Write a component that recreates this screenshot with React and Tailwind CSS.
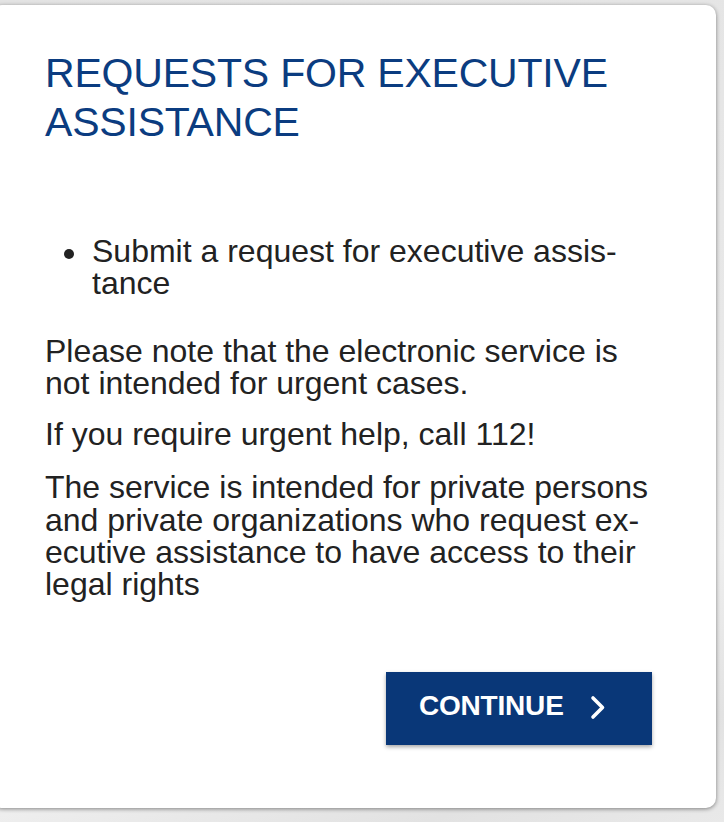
export default function App() {
  return (
    <div
      className="min-h-screen w-[724px] h-[822px] overflow-hidden bg-[linear-gradient(160deg,#e3e3e3_0%,#e8e8e8_55%,#eeeeee_75%,#e2e2e2_90%,#e9e9e9_100%)] pt-[5px]"
      style={{ fontFamily: '"Liberation Sans", Arial, Helvetica, sans-serif' }}
    >
      <div className="ml-[-8px] w-[724px] h-[803px] rounded-[10px] bg-white shadow-[0_1px_4px_rgba(0,0,0,0.45)] pl-[53px] pr-[64px] pt-[44px] flex flex-col">
        <h1 className="text-[41px] leading-[49px] text-[#0b3c80] font-normal tracking-[-0.2px]">
          <span className="block whitespace-nowrap">REQUESTS FOR EXECUTIVE</span>
          <span className="block whitespace-nowrap">ASSISTANCE</span>
        </h1>

        <div className="text-[32px] leading-[32.3px] text-[#222222]">
          <ul className="mt-[88px] pl-[19px]">
            <li className="flex items-start">
              <span className="mt-[14px] mr-[18px] w-[10px] h-[10px] rounded-full bg-[#222222] shrink-0" />
              <span>
                <span className="block whitespace-nowrap">Submit a request for executive assis-</span>
                <span className="block whitespace-nowrap">tance</span>
              </span>
            </li>
          </ul>

          <p className="mt-[35px]">
            <span className="block whitespace-nowrap">Please note that the electronic service is</span>
            <span className="block whitespace-nowrap">not intended for urgent cases.</span>
          </p>

          <p className="mt-[19px] whitespace-nowrap">If you require urgent help, call 112!</p>

          <p className="mt-[21px]">
            <span className="block whitespace-nowrap">The service is intended for private persons</span>
            <span className="block whitespace-nowrap">and private organizations who request ex-</span>
            <span className="block whitespace-nowrap">ecutive assistance to have access to their</span>
            <span className="block whitespace-nowrap">legal rights</span>
          </p>
        </div>

        <div className="mt-[71px] flex justify-end">
          <button className="w-[266px] h-[73px] bg-[#093778] text-white shadow-[0_2px_4px_rgba(0,0,0,0.35)] flex items-center pl-[33px]">
            <span className="text-[28px] font-bold leading-none tracking-[-0.2px] mt-[-4px]">CONTINUE</span>
            <svg
              className="ml-[26px] mt-[-2px]"
              width="16"
              height="25"
              viewBox="0 0 16 25"
              fill="none"
            >
              <path
                d="M3 3 L12.5 12.5 L3 22"
                stroke="white"
                strokeWidth="3.6"
                strokeLinecap="round"
                strokeLinejoin="round"
              />
            </svg>
          </button>
        </div>
      </div>
    </div>
  );
}
